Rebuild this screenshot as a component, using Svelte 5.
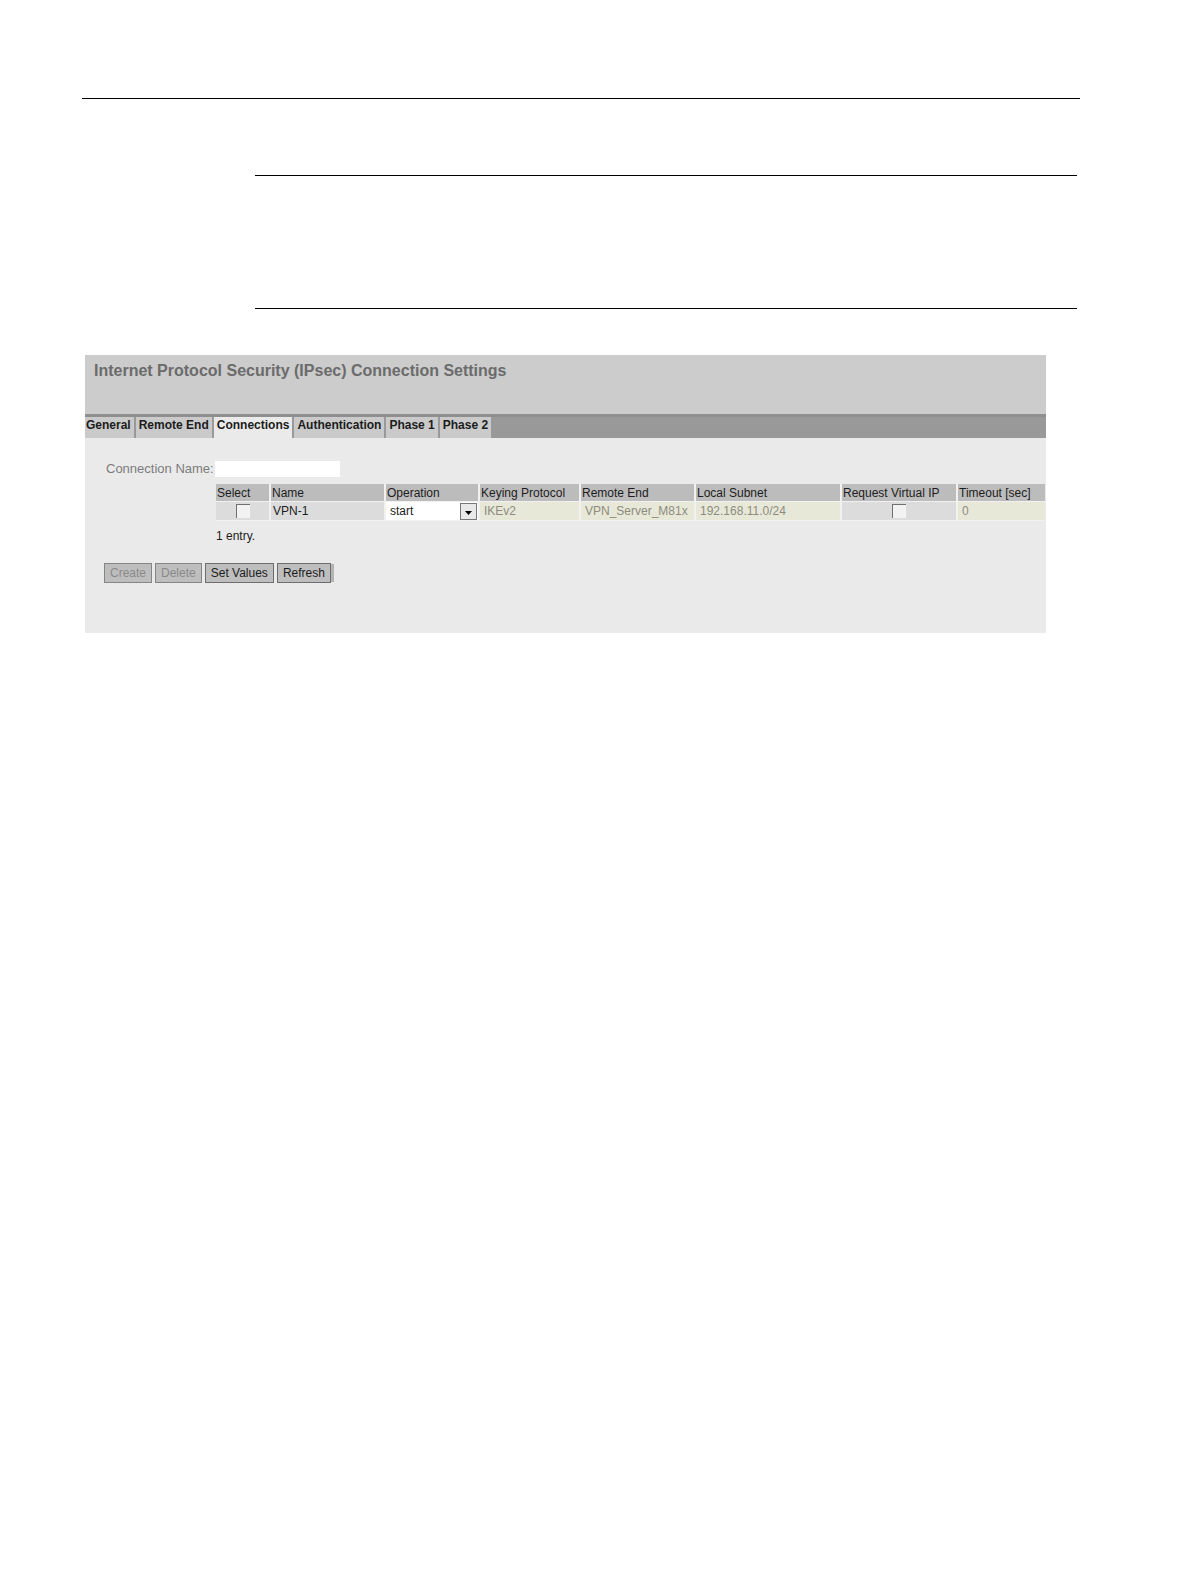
<script lang='ts'>
  const tabs = ['General', 'Remote End', 'Connections', 'Authentication', 'Phase 1', 'Phase 2']
  let active = $state('Connections')

  const columns = [
    { name: 'Select', id: 'select' },
    { name: 'Name', id: 'name' },
    { name: 'Operation', id: 'operation' },
    { name: 'Keying Protocol', id: 'protocol' },
    { name: 'Remote End', id: 'remote' },
    { name: 'Local Subnet', id: 'subnet' },
    { name: 'Request Virtual IP', id: 'virtual' },
    { name: 'Timeout [sec]', id: 'timeout' }
  ]

  let connectionName = $state('')
  let connections = $state([
    {
      selected: false,
      name: 'VPN-1',
      operation: 'start',
      protocol: 'IKEv2',
      remote: 'VPN_Server_M81x',
      subnet: '192.168.11.0/24',
      virtualIp: false,
      timeout: '0'
    }
  ])
</script>

<div class='page'>
  <hr>
  <div class='note'></div>

  <main class='panel'>
    <header>
      <h1>Internet Protocol Security (IPsec) Connection Settings</h1>
    </header>

    <nav>
      {#each tabs as tab}
        <a href='#{tab}' class:active={tab === active} onclick={() => { active = tab }}>{tab}</a>
      {/each}
    </nav>

    <form onsubmit={e => e.preventDefault()}>
      <label for='connection-name'>Connection Name:</label>
      <input id='connection-name' class='connection-name' type='text' bind:value={connectionName}>

      <div class='entries'>
        <table>
          <colgroup>
            {#each columns as column}
              <col class={column.id}>
            {/each}
          </colgroup>
          <thead>
            <tr>
              {#each columns as column}
                <th scope='col'>{column.name}</th>
              {/each}
            </tr>
          </thead>
          <tbody>
            {#each connections as row}
              <tr>
                <td class='check'><input type='checkbox' aria-label='Select' bind:checked={row.selected}></td>
                <td class='text'>{row.name}</td>
                <td class='choice'>
                  <select aria-label='Operation' bind:value={row.operation}>
                    <option>start</option>
                    <option>wait</option>
                    <option>disabled</option>
                  </select>
                  <svg viewBox='0 0 17 17' aria-hidden='true'>
                    <rect x='0.5' y='0.5' width='16' height='16' fill='#e9e9e9' stroke='#777' />
                    <path d='M5 8h7l-3.5 4z' fill='#000' />
                  </svg>
                </td>
                <td class='locked'><input type='text' aria-label='Keying Protocol' value={row.protocol} disabled></td>
                <td class='locked'><input type='text' aria-label='Remote End' value={row.remote} disabled></td>
                <td class='locked'><input type='text' aria-label='Local Subnet' value={row.subnet} disabled></td>
                <td class='check'><input type='checkbox' aria-label='Request Virtual IP' bind:checked={row.virtualIp}></td>
                <td class='locked'><input type='text' aria-label='Timeout' value={row.timeout} disabled></td>
              </tr>
            {/each}
          </tbody>
        </table>
        <p>{connections.length} entry.</p>
      </div>

      <div class='actions'>
        <button type='button' disabled>Create</button>
        <button type='button' disabled>Delete</button>
        <button type='submit'>Set Values</button>
        <button type='button' class='last'>Refresh</button>
      </div>
    </form>
  </main>
</div>

<style>
  :global(body) {
    background: #fff;
  }
  .page {
    padding: 98px 111px 48px 82px;
    font: 12px/16px 'Liberation Sans', Arial, sans-serif;
    color: #1c1c1c;
  }
  hr {
    height: 1px;
    margin: 0 0 76px;
    border: 0;
    background: #000;
  }
  .note {
    height: 132px;
    margin: 0 3px 46px 173px;
    border: solid #000;
    border-width: 1px 0;
    box-sizing: content-box;
  }
  .panel {
    margin: 0 34px 0 3px;
    background: #eaeaea;
  }
  header {
    height: 59px;
    background: #ccc;
  }
  h1 {
    margin: 0;
    padding: 6px 9px;
    font-size: 16px;
    line-height: 20px;
    color: #6b6b6b;
  }
  nav {
    display: flex;
    gap: 2px;
    border-top: 3px solid #8f8f8f;
    background: #999;
  }
  nav a {
    padding: 0 3px 5px;
    background: #cacaca;
    font-weight: bold;
    color: #1c1c1c;
    text-decoration: none;
  }
  nav a:first-child {
    padding-left: 1px;
  }
  nav a.active {
    background: #eaeaea;
  }
  form {
    display: grid;
    grid-template-columns: 107px 1fr;
    column-gap: 2px;
    padding: 23px 1px 50px 21px;
  }
  label {
    font-size: 13px;
    color: #7c7c7c;
    white-space: nowrap;
  }
  input, select, button {
    margin: 0;
    font: inherit;
    color: inherit;
    border-radius: 0;
  }
  .connection-name {
    width: 125px;
    height: 16px;
    padding: 0 4px;
    box-sizing: border-box;
    border: 0;
    background: #fff;
  }
  .entries {
    grid-column: 2;
    min-width: 0;
    padding: 7px 0 0 1px;
  }
  table {
    width: 100%;
    table-layout: fixed;
    border-collapse: collapse;
  }
  .select { width: 54px; }
  .name { width: 115px; }
  .operation { width: 94px; }
  .protocol { width: 101px; }
  .remote { width: 115px; }
  .subnet { width: 146px; }
  .virtual { width: 116px; }
  th, td {
    padding: 0;
    border-right: 2px solid #f1f1f1;
    border-bottom: 1px solid #f1f1f1;
    white-space: nowrap;
  }
  th:last-child, td:last-child {
    border-right: 0;
  }
  th {
    height: 17px;
    padding-left: 1px;
    background: #bcbcbc;
    font-weight: normal;
    text-align: left;
  }
  td {
    height: 18px;
    background: #dcdcdc;
  }
  td.text {
    padding-left: 2px;
  }
  td.check {
    text-align: center;
  }
  td.choice {
    position: relative;
    background: #fff;
  }
  td.locked {
    background: #e8e8d8;
  }
  td.locked input {
    display: block;
    width: 100%;
    height: 18px;
    padding: 0 0 0 4px;
    box-sizing: border-box;
    border: 0;
    background: none;
    color: #8c8c7e;
  }
  input[type='checkbox'] {
    display: block;
    width: 14px;
    height: 14px;
    margin: 0 auto;
    appearance: none;
    border: solid #707070;
    border-width: 1px 0 0 1px;
    background: #f2f2f2;
  }
  input[type='checkbox']:checked {
    background: #555;
  }
  select {
    display: block;
    width: 100%;
    height: 18px;
    padding: 0 20px 0 4px;
    appearance: none;
    border: 0;
    background: none;
  }
  td.choice svg {
    position: absolute;
    top: 1px;
    right: 1px;
    width: 17px;
    height: 17px;
    pointer-events: none;
  }
  p {
    margin: 7px 0 0;
  }
  .actions {
    grid-column: 1 / -1;
    display: flex;
    gap: 3px;
    margin: 19px 0 0 -2px;
  }
  button {
    height: 20px;
    padding: 0 5px;
    border: 1px solid #6e6e6e;
    background: #bebebe;
    line-height: 18px;
  }
  button:disabled {
    border-color: #858585;
    color: #8a8a8a;
  }
  button.last {
    box-shadow: 4px 0 0 -1px #b4b4b4;
  }
</style>
